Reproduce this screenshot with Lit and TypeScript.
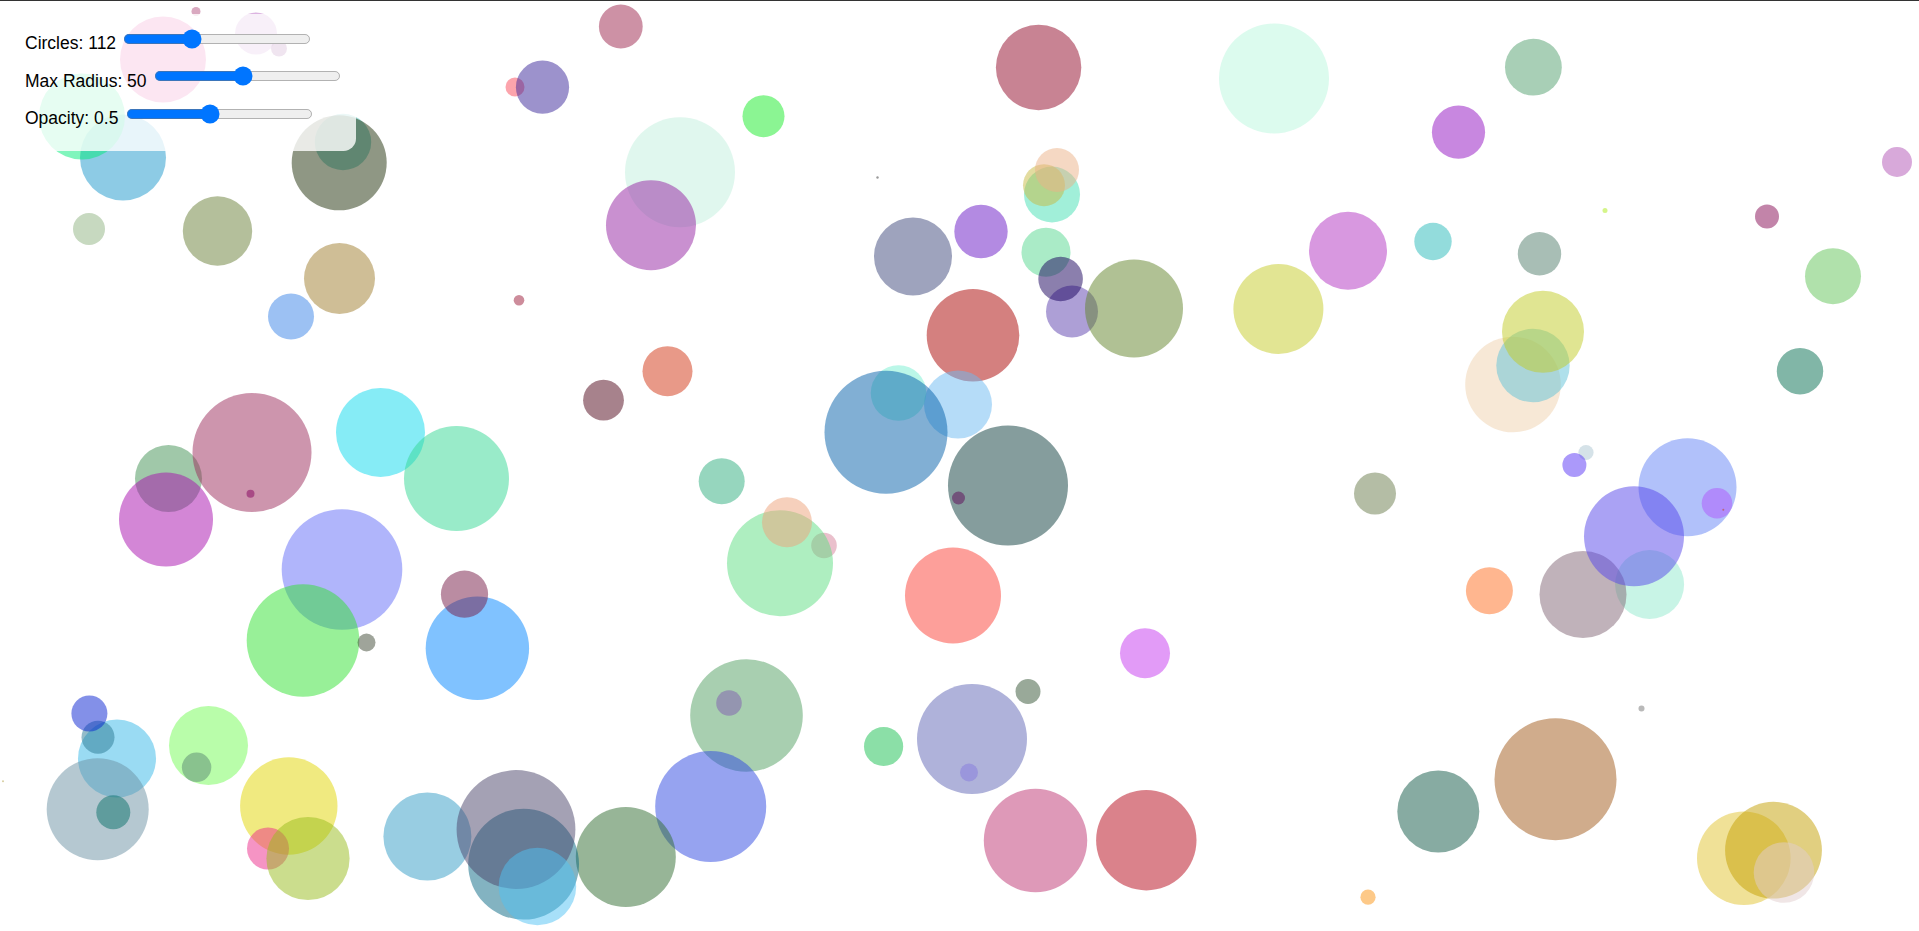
import { LitElement, html, css, svg } from "lit";
import { customElement } from "lit/decorators.js";

// cx, cy, r, colour as it appears on white at 50% opacity. Listed bottom to top.
type C = [number, number, number, string];
const CIRCLES: C[] = [
  [196, 11, 4.5, "#d9a9c0"], [256, 33, 21, "#dcb4e1"], [279, 48, 8, "#b473b4"], [163, 59, 43, "#f082be"],
  [123, 157, 43, "#8dcbe5"], [82, 116, 43, "#80f5bc"], [343, 141.5, 28.2, "#a1dcd8"], [339.2, 162.3, 47.5, "#8f9784"],
  [217.5, 230.5, 34.7, "#b4bf9b"], [89, 228.5, 16, "#c7d9c0"], [339.5, 278, 35.5, "#cfbe96"], [291, 316, 23, "#9cc1f3"],
  [620.8, 26, 21.9, "#cd91a5"], [515, 86.5, 9.5, "#fca4ac"], [542.5, 86.7, 26.6, "#9c92cc"], [763.5, 115.7, 21, "#8bf593"],
  [680, 171.7, 55, "#e0f7ee"], [651, 224.8, 45, "#c990d0"], [877.5, 177, 1.2, "#9a9a9a"], [913, 256, 39, "#9ea3bd"],
  [519, 299.7, 5.3, "#cd8c9b"], [667.5, 370.7, 25, "#e89988"], [603.5, 399.7, 20.4, "#a7828c"],
  [168.5, 478, 33.5, "#a0c8a9"], [252, 452, 59.5, "#cd95ad"], [380.5, 432, 44.5, "#86ecf6"], [456.5, 478, 52.5, "#99ebc9"],
  [250.5, 493.3, 4, "#c17fae"], [166, 519, 47, "#d386d6"],
  [973, 334.7, 46.3, "#d48078"], [958, 404, 34, "#b5dcf8"], [898.5, 392.5, 27.8, "#bbf7e8"], [886, 431.7, 61.5, "#81afd4"],
  [1038.6, 67, 42.7, "#c88393"], [1274, 78, 55, "#dcfbee"], [1533.4, 66.7, 28.4, "#a8cfb6"], [1458.5, 131.7, 26.6, "#c887e0"],
  [1897, 161.5, 15, "#d8a9da"], [1605, 210, 2.5, "#d5f58a"], [1767, 216, 12, "#c284a9"],
  [1052, 194, 28, "#a1efd9"], [1044, 184.7, 21, "#e3dca0"], [1057, 169.5, 22, "#f5d8c3"], [981, 231, 26.7, "#b38ae2"],
  [1046, 251.7, 24.5, "#aaebc7"], [1072, 311, 26, "#ad9fd6"], [1060.6, 278.5, 22.3, "#8b7fad"], [1134, 308, 49, "#b0c194"],
  [1278.4, 308.5, 45, "#e2e593"], [1348, 250.3, 39, "#d898e0"], [1433, 241, 18.7, "#93dcdc"], [1539.5, 253.3, 21.7, "#a8beb5"],
  [1513, 384, 47.8, "#f7e8d6"], [1533, 365, 36.7, "#afe0eb"], [1543, 331.3, 41, "#e0e592"],
  [1833, 275.7, 28, "#b0e1ab"], [1800, 370.7, 23.2, "#81b6a7"], [1586, 452, 7.6, "#d5e2e8"], [1574.4, 464.5, 12, "#ab99fa"],
  [1687.5, 486.7, 49, "#b1c1fa"], [1717, 502.7, 15.3, "#d7aafd"], [1723.3, 509.3, 1, "#e0a080"],
  [1008, 485, 60, "#859d9d"], [958.5, 497.5, 6.5, "#ae83ab"], [1375, 493, 21, "#b4bda5"],
  [1649.6, 584, 34.5, "#c8f4e6"], [1583, 594, 43.5, "#c0b2ba"], [1634, 535.8, 50, "#aaa2f4"], [1489.4, 590.3, 23.5, "#ffb68f"],
  [953, 595, 48, "#fd9f9a"], [1145, 652.7, 25, "#e29bf7"], [1028, 691, 12.5, "#99a999"],
  [972, 738.5, 55, "#afb2da"], [969, 772, 9, "#c2bcee"], [1641.5, 708, 3, "#b9b9b9"], [1555.5, 778.7, 61, "#d0ac8c"],
  [1438.3, 811, 41, "#87aba2"], [1035.5, 840, 51.7, "#de99b8"], [1146.3, 839.7, 50.2, "#da828b"], [1368, 896.7, 7.6, "#fdc988"],
  [1743.8, 857.7, 46.8, "#f0e197"], [1773.5, 849.7, 48.4, "#e1cf80"], [1784, 872, 30.3, "#f0e6e6"],
  [342, 569, 60.3, "#b0b5fb"], [303, 640, 56.3, "#98f098"], [366.5, 642, 9, "#9fa49a"], [477.4, 647.7, 51.7, "#80c2ff"], [464.5, 593.7, 23.6, "#ba8ca2"],
  [721.7, 480.7, 23, "#96d6be"], [824, 545, 12.8, "#eac0cc"], [780, 562.7, 53, "#aeeec0"], [787, 521.7, 25, "#f6d0bc"],
  [746.5, 715, 56.3, "#a8cfb0"], [729, 702.5, 12.8, "#bfadd7"], [710.7, 806, 55.5, "#96a3f0"], [883.6, 746, 19.6, "#8bdfa7"],
  [117, 758, 39, "#9adbf3"], [98, 736.7, 16.5, "#94bcc9"], [89.4, 713, 18, "#8390e8"], [208.5, 745, 39.5, "#b9fdaa"], [196.6, 766.8, 14.7, "#acc3b8"],
  [97.7, 808.7, 51, "#b5c8d1"], [113.3, 811.8, 17, "#84b7b4"], [288.8, 805.5, 48.7, "#f0ea80"], [268, 848, 21, "#f594c4"], [308, 858, 41.6, "#cbdd8d"],
  [427.4, 836, 44, "#98cde2"], [625.8, 856.5, 50, "#97b597"], [523.6, 863.7, 55.4, "#83b3c1"], [516, 829, 59.4, "#a4a1b4"], [537.4, 886, 38.8, "#a7e0f9"],
  [3, 780.7, 1, "#d8cfa0"],
];

function fillOf(hex: string): string {
  const n = parseInt(hex.slice(1), 16);
  const up = (v: number) => Math.max(0, Math.min(255, 2 * v - 255));
  return `rgb(${up((n >> 16) & 255)},${up((n >> 8) & 255)},${up(n & 255)})`;
}

@customElement("app-root")
export class AppRoot extends LitElement {
  static styles = css`
    :host {
      display: block;
      height: 931px;
      overflow: hidden;
      background: #fff;
      font-family: "Liberation Sans", Arial, sans-serif;
    }
    .topline { height: 1px; background: #333; }
    .stage { position: relative; height: 930px; }
    .canvas { display: block; position: absolute; inset: 0; }
    .panel {
      position: absolute;
      top: 10px;
      left: 10px;
      zoom: 1.25;
      padding: 10px;
      border-radius: 10px;
      background: rgba(255, 255, 255, 0.8);
      font-size: 14px;
      color: #000;
    }
    .row { display: block; margin-bottom: 8px; }
    .row input { width: 150px; }
  `;

  render() {
    return html`
      <div class="topline"></div>
      <div class="stage">
        <svg class="canvas" width="1919" height="930" viewBox="0 0.5 1919 930">
          ${CIRCLES.map(([x, y, r, c]) => svg`<circle cx=${x} cy=${y} r=${r} fill=${fillOf(c)} fill-opacity="0.5"></circle>`)}
        </svg>
        <div class="panel">
          <label class="row">Circles: 112 <input type="range" min="10" max="300" value="112" /></label>
          <label class="row">Max Radius: 50 <input type="range" min="5" max="100" value="50" /></label>
          <label class="row">Opacity: 0.5 <input type="range" min="0.1" max="1" step="0.1" value="0.5" /></label>
        </div>
      </div>
    `;
  }
}
